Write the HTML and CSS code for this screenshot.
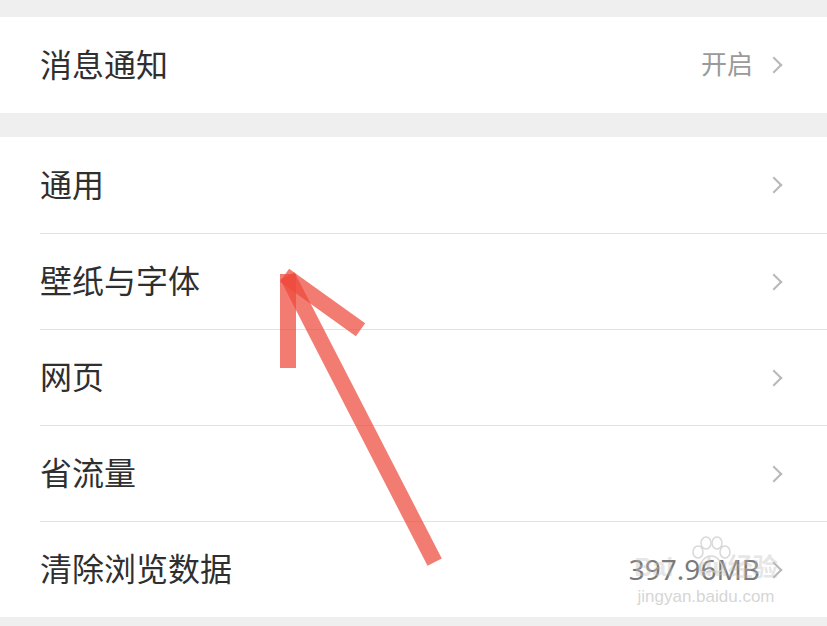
FILE: index.html
```html
<!DOCTYPE html>
<html lang="zh">
<head>
<meta charset="utf-8">
<link rel="stylesheet" href="styles.css">
</head>
<body>
<div class="page">
  <div class="group">
    <div class="row"><span class="label">消息通知</span><span class="value">开启</span><span class="chev"></span></div>
  </div>
  <div class="group">
    <div class="row"><span class="label">通用</span><span class="chev"></span></div>
    <div class="row"><span class="label">壁纸与字体</span><span class="chev"></span></div>
    <div class="row"><span class="label">网页</span><span class="chev"></span></div>
    <div class="row"><span class="label">省流量</span><span class="chev"></span></div>
    <div class="row"><span class="label">清除浏览数据</span><span class="value dark">397.96MB</span><span class="chev"></span></div>
  </div>

  <svg class="arrow" width="827" height="626" viewBox="0 0 827 626">
    <g stroke="#ee4a3c" stroke-width="16" stroke-linecap="square" fill="none" stroke-opacity="0.72">
      <line x1="291" y1="283" x2="431" y2="555"/>
      <line x1="288" y1="282" x2="288" y2="360"/>
      <line x1="291" y1="280" x2="354" y2="325"/>
    </g>
  </svg>

  <div class="watermark">
    <svg class="paw" width="46" height="40" viewBox="0 0 46 40">
      <g fill="none" stroke="#cfcfcf" stroke-width="1.5">
        <ellipse cx="10" cy="16" rx="5" ry="6"/>
        <ellipse cx="18" cy="7" rx="5" ry="6"/>
        <ellipse cx="29" cy="7" rx="5" ry="6"/>
        <ellipse cx="37" cy="16" rx="5" ry="6"/>
        <path d="M23 20 C16 20 11 28 12 33 C13 37 19 36 23 35 C27 36 33 37 34 33 C35 28 30 20 23 20 Z"/>
      </g>
    </svg>
    <div class="wm-brand">Bai<span class="gap"></span>du经验</div>
    <div class="wm-url">jingyan.baidu.com</div>
  </div>
</div>
</body>
</html>
```
FILE: styles.css
```css
html, body {
  margin: 0;
  padding: 0;
}
body {
  background: #efeff0;
  font-family: "Noto Sans CJK SC", "Noto Sans", sans-serif;
}
.page {
  position: relative;
  width: 827px;
  height: 626px;
  overflow: hidden;
  padding-top: 17px;
  box-sizing: border-box;
  display: flex;
  flex-direction: column;
  gap: 24px;
}
.group {
  background: #ffffff;
  padding-left: 40px;
}
.row {
  height: 96px;
  box-sizing: border-box;
  display: flex;
  align-items: center;
  padding-right: 45px;
}
.row + .row {
  border-top: 1px solid #e3e3e3;
}
.label {
  flex: 1;
  font-size: 32px;
  color: #2f2f2f;
  line-height: 1;
  padding-bottom: 5px;
}
.value {
  font-size: 26px;
  color: #9a9a9a;
  margin-right: 15px;
  line-height: 1;
  padding-bottom: 4px;
}
.value.dark {
  font-size: 28px;
  color: #7a7a7a;
  margin-right: 8px;
  font-family: "Noto Sans", sans-serif;
  padding-bottom: 2px;
}
.chev {
  width: 10px;
  height: 10px;
  border-top: 2px solid #b8b8b8;
  border-right: 2px solid #b8b8b8;
  transform: rotate(45deg);
  margin-right: 2px;
}
.arrow {
  position: absolute;
  left: 0;
  top: 0;
  pointer-events: none;
}
.watermark {
  position: absolute;
  left: 626px;
  top: 536px;
  width: 160px;
  height: 72px;
  text-align: center;
  white-space: nowrap;
  pointer-events: none;
}
.paw {
  position: absolute;
  left: 62px;
  top: 0;
  opacity: 0.8;
}
.wm-brand {
  position: absolute;
  left: 0;
  right: 0;
  top: 16px;
  font-size: 25px;
  font-weight: bold;
  line-height: 30px;
  color: rgba(190, 190, 190, 0.4);
  font-family: "Liberation Sans", "Noto Sans CJK SC", sans-serif;
}
.gap {
  display: inline-block;
  width: 24px;
}
.wm-url {
  position: absolute;
  left: 0;
  right: 0;
  top: 51px;
  font-size: 17px;
  line-height: 20px;
  color: #d6d6d6;
  font-family: "Liberation Sans", sans-serif;
}
```
